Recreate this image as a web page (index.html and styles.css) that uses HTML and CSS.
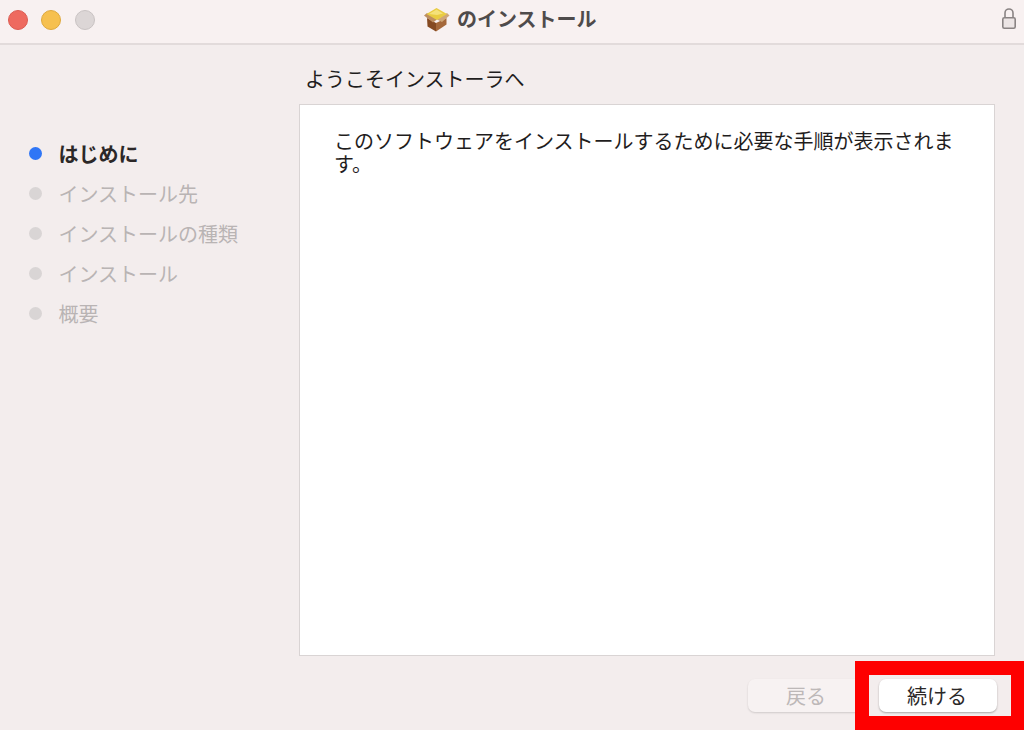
FILE: index.html
```html
<!DOCTYPE html>
<html lang="ja">
<head>
    <meta charset="UTF-8">
    <title>のインストール</title>
    <link rel="stylesheet" href="styles.css">
</head>
<body>
    <div class="window">
        <header class="titlebar">
            <div class="traffic">
                <span class="light red"></span>
                <span class="light yellow"></span>
                <span class="light gray"></span>
            </div>
            <div class="title">
                <svg class="box-icon" width="28" height="26" viewBox="0 0 28 26">
                    <path d="M4 12 L13 17 L13 25.5 L4.5 20.5 Z" fill="#854a22"/>
                    <path d="M13 17 L23.5 12 L23.5 18.5 L13 25.5 Z" fill="#a5683a"/>
                    <path d="M1 9.5 L4 7 L14 13.5 L10 16.5 Z" fill="#bd8e60"/>
                    <path d="M26.5 9.5 L24 7 L14 13.5 L19 16 Z" fill="#cfa677"/>
                    <path d="M3.5 8 L13.5 2 L24 8 L14 14 Z" fill="#e9cc42"/>
                    <path d="M6 8 L13.5 3.5 L20 7.5 L14 9 Z" fill="#f5e27a"/>
                </svg>
                <span>のインストール</span>
            </div>
            <svg class="lock" width="14" height="21" viewBox="0 0 14 21">
                <path d="M3 10 V5 a4 4 0 0 1 8 0 V10" fill="none" stroke="#8a8484" stroke-width="1.6"/>
                <rect x="0.8" y="9.8" width="12.4" height="10.4" rx="1.5" fill="#ece5e5" stroke="#8a8484" stroke-width="1.6"/>
            </svg>
        </header>

        <div class="content">
            <ul class="steps">
                <li class="step active"><span class="dot"></span>はじめに</li>
                <li class="step"><span class="dot"></span>インストール先</li>
                <li class="step"><span class="dot"></span>インストールの種類</li>
                <li class="step"><span class="dot"></span>インストール</li>
                <li class="step"><span class="dot"></span>概要</li>
            </ul>
            <main class="main">
                <h2 class="heading">ようこそインストーラへ</h2>
                <div class="panel">
                    <p>このソフトウェアをインストールするために必要な手順が表示されます。</p>
                </div>
            </main>
        </div>

        <footer class="footer">
            <button class="btn" disabled>戻る</button>
            <button class="btn primary">続ける</button>
        </footer>
    </div>
    <div class="highlight"></div>
</body>
</html>
```

FILE: styles.css
```css
* {
    box-sizing: border-box;
}

html, body {
    height: 100%;
    margin: 0;
    padding: 0;
    overflow: hidden;
    font-family: "Noto Sans CJK JP", "Noto Sans", sans-serif;
    background-color: #f3eded;
}

.window {
    height: 730px;
    display: flex;
    flex-direction: column;
}

.titlebar {
    height: 45px;
    flex: none;
    display: flex;
    align-items: center;
    justify-content: space-between;
    position: relative;
    padding: 0 8px 0 8px;
    background-color: #f8f1f1;
    border-bottom: 2px solid #e2dbdb;
}

.traffic {
    display: flex;
    gap: 13.4px;
    margin-bottom: 4px;
}

.light {
    width: 20px;
    height: 20px;
    border-radius: 50%;
}

.red {
    background-color: #ee6a5f;
    border: 1px solid #dc5c52;
}

.yellow {
    background-color: #f6c04f;
    border: 1px solid #dfa93d;
}

.gray {
    background-color: #dcd6d6;
    border: 1px solid #c9c3c3;
}

.title {
    position: absolute;
    left: 423px;
    top: 5px;
    display: flex;
    align-items: center;
    gap: 6px;
    font-size: 20px;
    font-weight: 700;
    line-height: 28px;
    color: #4f4b4b;
}

.lock {
    margin-bottom: 6px;
}

.content {
    flex: 1;
    display: flex;
}

.steps {
    width: 299px;
    flex: none;
    list-style: none;
    margin: 0;
    padding: 88px 0 0 28.5px;
}

.step {
    height: 40px;
    display: flex;
    align-items: center;
    gap: 17px;
    font-size: 20px;
    color: #b9b4b4;
}

.dot {
    width: 13px;
    height: 13px;
    margin-top: 1px;
    border-radius: 50%;
    background-color: #d9d5d5;
}

.step.active {
    font-weight: 700;
    color: #2b2828;
}

.step.active .dot {
    background-color: #2f76f6;
}

.main {
    width: 696px;
    display: flex;
    flex-direction: column;
}

.heading {
    margin: 19px 0 10px 6px;
    font-size: 20px;
    font-weight: 400;
    line-height: 30px;
    color: #1f1d1d;
}

.panel {
    height: 552px;
    padding: 24px 38px 24px 34px;
    background-color: white;
    border: 1px solid #d9d4d4;
}

.panel p {
    margin: 0;
    font-size: 20px;
    line-height: 23px;
    color: #1f1d1d;
}

.footer {
    height: 74px;
    flex: none;
    display: flex;
    justify-content: flex-end;
    gap: 13px;
    padding: 23px 27px 0 0;
}

.btn {
    width: 118px;
    height: 33px;
    padding: 0 2px 0 0;
    border: none;
    border-radius: 7px;
    font-family: inherit;
    font-size: 20px;
    line-height: 33px;
    color: #bdb8b8;
    background-color: #f7f2f2;
    box-shadow: 0 1px 2px rgba(0, 0, 0, 0.15);
}

.btn.primary {
    color: #2b2828;
    background-color: white;
    box-shadow: 0 1px 2px rgba(0, 0, 0, 0.3);
}

.highlight {
    position: absolute;
    left: 855px;
    top: 661px;
    width: 169px;
    height: 69px;
    border: 14px solid #fe0000;
    border-right-width: 13px;
}
```
